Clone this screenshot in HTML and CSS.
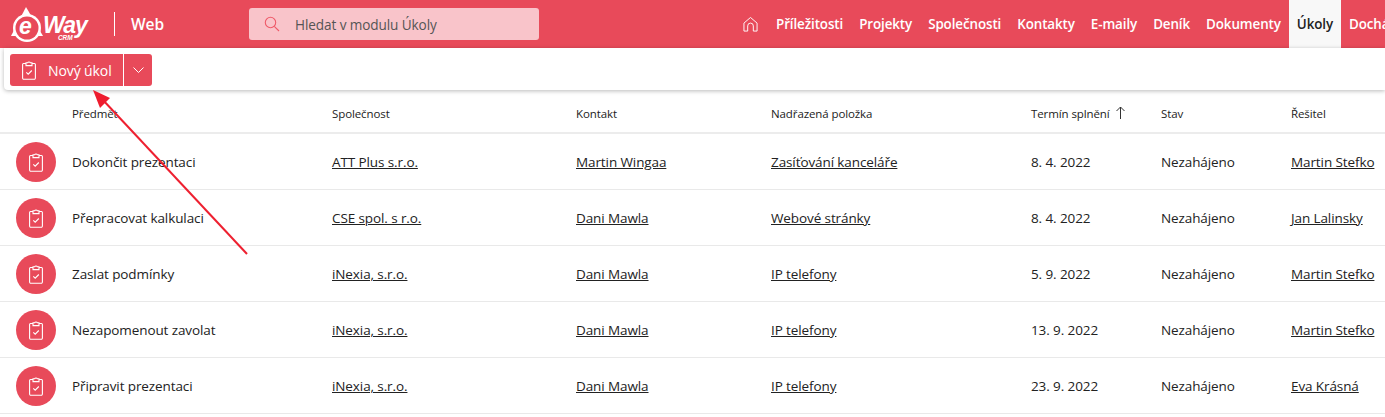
FILE: index.html
```html
<!DOCTYPE html>
<html lang="cs">

<head>
  <meta charset="UTF-8" />
  <meta name="viewport" content="width=device-width, initial-scale=1" />
  <title>eWay CRM Web - Úkoly</title>
  <link rel="stylesheet" href="styles.css">
</head>

<body>
  <svg class="sprites" width="0" height="0">
    <symbol id="icon-task" viewBox="0 0 14 19">
      <path d="M4 2.500 H1.500 A1 1 0 0 0 .6 3.500 V17 A1.200 1.200 0 0 0 1.800 18.300 H12.200 A1.200 1.200 0 0 0 13.400 17 V3.500 A1 1 0 0 0 12.500 2.500 H10" fill="none" stroke="#fff" stroke-width="1.100" />
      <path d="M4 4.600 V1.700 H5.600 A1.500 1.100 0 0 1 8.400 1.700 H10 V4.600 Z" fill="none" stroke="#fff" stroke-width="1.100" />
      <path d="M4.300 11.300 L6.200 13.200 L9.800 9.500" fill="none" stroke="#fff" stroke-width="1.100" />
    </symbol>
  </svg>

  <header class="topbar">
    <div class="brand">
      <svg class="logo" width="82" height="36" viewBox="0 0 82 36">
        <path d="M16 1 L1 30 H33 Z" fill="#fff" />
        <circle cx="17" cy="22" r="14" fill="#fff" />
        <circle cx="17" cy="22" r="11.500" fill="#e84a5a" />
        <text x="9" y="27.500" class="logo-e">e</text>
        <text x="33" y="27" class="logo-way">Way</text>
        <text x="48" y="34" class="logo-crm">CRM</text>
      </svg>
      <span class="brand-sep"></span>
      <span class="brand-name">Web</span>
    </div>

    <div class="search">
      <svg width="16" height="16" viewBox="0 0 16 16" fill="none" stroke="#ef5a69" stroke-width="1.100">
        <circle cx="6.500" cy="6.500" r="5.200" />
        <path d="M10.300 10.300 L15 15" />
      </svg>
      <span>Hledat v modulu Úkoly</span>
    </div>

    <nav class="menu">
      <a class="menu-home" href="#">
        <svg width="15" height="17" viewBox="0 0 16 17" fill="none" stroke="#fff" stroke-width="1">
          <path d="M1 15.500 V7 L8 1 L15 7 V15.500 H11 V10 A3 3 0 0 0 5 10 V15.500 Z" stroke-linejoin="round" />
        </svg>
      </a>
      <a href="#">Příležitosti</a>
      <a href="#">Projekty</a>
      <a href="#">Společnosti</a>
      <a href="#">Kontakty</a>
      <a href="#">E-maily</a>
      <a href="#">Deník</a>
      <a href="#">Dokumenty</a>
      <a class="active" href="#">Úkoly</a>
      <a href="#">Docházka</a>
    </nav>
  </header>

  <div class="toolbar">
    <div class="new-btn">
      <button class="new-main">
        <svg width="14" height="19"><use href="#icon-task" /></svg>
        Nový úkol
      </button>
      <button class="new-more">
        <svg width="11" height="6" viewBox="0 0 11 6" fill="none" stroke="#fff" stroke-width="1">
          <path d="M.5 .5 L5.500 5.500 L10.500 .5" />
        </svg>
      </button>
    </div>
  </div>

  <div class="list">
    <div class="row head">
      <span></span>
      <span>Předmět</span>
      <span>Společnost</span>
      <span>Kontakt</span>
      <span>Nadřazená položka</span>
      <span class="sorted">Termín splnění
        <svg width="9" height="13" viewBox="0 0 9 13" fill="none" stroke="#333" stroke-width="1">
          <path d="M4.500 13 V1 M.5 5 L4.500 1 L8.500 5" />
        </svg>
      </span>
      <span>Stav</span>
      <span>Řešitel</span>
    </div>

    <div class="row">
      <span class="badge"><svg width="14" height="19"><use href="#icon-task" /></svg></span>
      <span>Dokončit prezentaci</span>
      <a href="#">ATT Plus s.r.o.</a>
      <a href="#">Martin Wingaa</a>
      <a href="#">Zasíťování kanceláře</a>
      <span>8. 4. 2022</span>
      <span>Nezahájeno</span>
      <a href="#">Martin Stefko</a>
    </div>
    <div class="row">
      <span class="badge"><svg width="14" height="19"><use href="#icon-task" /></svg></span>
      <span>Přepracovat kalkulaci</span>
      <a href="#">CSE spol. s r.o.</a>
      <a href="#">Dani Mawla</a>
      <a href="#">Webové stránky</a>
      <span>8. 4. 2022</span>
      <span>Nezahájeno</span>
      <a href="#">Jan Lalinsky</a>
    </div>
    <div class="row">
      <span class="badge"><svg width="14" height="19"><use href="#icon-task" /></svg></span>
      <span>Zaslat podmínky</span>
      <a href="#">iNexia, s.r.o.</a>
      <a href="#">Dani Mawla</a>
      <a href="#">IP telefony</a>
      <span>5. 9. 2022</span>
      <span>Nezahájeno</span>
      <a href="#">Martin Stefko</a>
    </div>
    <div class="row">
      <span class="badge"><svg width="14" height="19"><use href="#icon-task" /></svg></span>
      <span>Nezapomenout zavolat</span>
      <a href="#">iNexia, s.r.o.</a>
      <a href="#">Dani Mawla</a>
      <a href="#">IP telefony</a>
      <span>13. 9. 2022</span>
      <span>Nezahájeno</span>
      <a href="#">Martin Stefko</a>
    </div>
    <div class="row">
      <span class="badge"><svg width="14" height="19"><use href="#icon-task" /></svg></span>
      <span>Připravit prezentaci</span>
      <a href="#">iNexia, s.r.o.</a>
      <a href="#">Dani Mawla</a>
      <a href="#">IP telefony</a>
      <span>23. 9. 2022</span>
      <span>Nezahájeno</span>
      <a href="#">Eva Krásná</a>
    </div>
  </div>

  <!-- Red arrow drawn over the page -->
  <svg class="callout" width="260" height="270" viewBox="0 0 260 270">
    <path d="M247 254 L102 99" stroke="#ee2030" stroke-width="2" />
    <path d="M93 90 L110 98 L100 108 Z" fill="#ee1c2e" />
  </svg>
</body>

</html>
```

FILE: styles.css
```css
html,
body {
  height: 100%;
}

body {
  margin: 0;
  overflow: hidden;
  position: relative;
  background-color: #fff;
  color: #222;
  font-family: "Open Sans", "Noto Sans", sans-serif;
  font-size: 13.500px;
  letter-spacing: -0.1px;
}

a {
  color: inherit;
}

.sprites {
  position: absolute;
}

.topbar {
  display: flex;
  align-items: center;
  height: 48px;
  background-color: #e84a5a;
  white-space: nowrap;
}

.brand {
  display: flex;
  align-items: center;
  width: 249px;
  flex: none;
  padding-left: 10px;
  box-sizing: border-box;
}

.logo {
  flex: none;
}

.logo-e {
  fill: #fff;
  font-family: "Liberation Sans", sans-serif;
  font-size: 23px;
  font-style: italic;
  font-weight: bold;
}

.logo-way {
  fill: #fff;
  font-family: "Liberation Sans", sans-serif;
  font-size: 23px;
  font-style: italic;
  font-weight: bold;
  letter-spacing: -1px;
}

.logo-crm {
  fill: #fff;
  font-family: "Liberation Sans", sans-serif;
  font-size: 6.500px;
  font-weight: bold;
  font-style: italic;
}

.brand-sep {
  width: 1px;
  height: 24px;
  margin: 0 16px 0 22px;
  background-color: #fff;
}

.brand-name {
  color: #fff;
  font-size: 15.500px;
  font-weight: 600;
}

.search {
  display: flex;
  align-items: center;
  gap: 15px;
  width: 290px;
  height: 32px;
  padding-left: 15px;
  box-sizing: border-box;
  flex: none;
  background-color: #f9c4ca;
  border-radius: 3px;
  color: #555;
  font-size: 13.600px;
}

.menu {
  display: flex;
  align-items: center;
  height: 100%;
  margin-left: 196px;
  flex: none;
}

.menu a {
  display: flex;
  align-items: center;
  height: 100%;
  padding: 0 8px;
  color: #fff;
  font-size: 13.400px;
  font-weight: 600;
  text-decoration: none;
}

.menu a.menu-home {
  margin-right: 2px;
}

.menu a.active {
  background-color: #f8f8f8;
  color: #222;
}

.toolbar {
  display: flex;
  align-items: flex-start;
  height: 42px;
  margin-left: 4px;
  padding: 6px 0 0 6px;
  box-sizing: border-box;
  background-color: #fff;
  border-radius: 0 0 0 4px;
  box-shadow: 0 1px 4px rgba(0, 0, 0, 0.28);
  position: relative;
}

.new-btn {
  display: flex;
  height: 32px;
  border-radius: 3px;
  overflow: hidden;
  background-color: #e84a5a;
}

.new-btn button {
  display: flex;
  align-items: center;
  height: 100%;
  border: none;
  padding: 0;
  background-color: transparent;
  color: #fff;
  font-family: inherit;
  font-size: 14px;
  letter-spacing: inherit;
  cursor: pointer;
}

.new-btn .new-main {
  width: 114px;
  gap: 12px;
  padding-left: 12px;
  border-right: 1px solid #fff;
  box-sizing: border-box;
}

.new-more {
  width: 28px;
  justify-content: center;
}

.row {
  display: grid;
  grid-template-columns: 72px 260px 244px 195px 260px 130px 130px 1fr;
  align-items: center;
  height: 56px;
  box-sizing: border-box;
  padding-top: 1px;
  border-bottom: 1px solid #e9e9e9;
}

.row > a {
  justify-self: start;
}

.row.head {
  height: 44px;
  padding-top: 4px;
  border-bottom: 2px solid #ececec;
  font-size: 11.500px;
}

.sorted svg {
  margin-left: 4px;
  vertical-align: -1px;
}

.badge {
  display: flex;
  align-items: center;
  justify-content: center;
  width: 40px;
  height: 40px;
  margin-left: 16px;
  border-radius: 50%;
  background-color: #e84a5a;
}

.callout {
  position: absolute;
  left: 0;
  top: 0;
  pointer-events: none;
}
```
